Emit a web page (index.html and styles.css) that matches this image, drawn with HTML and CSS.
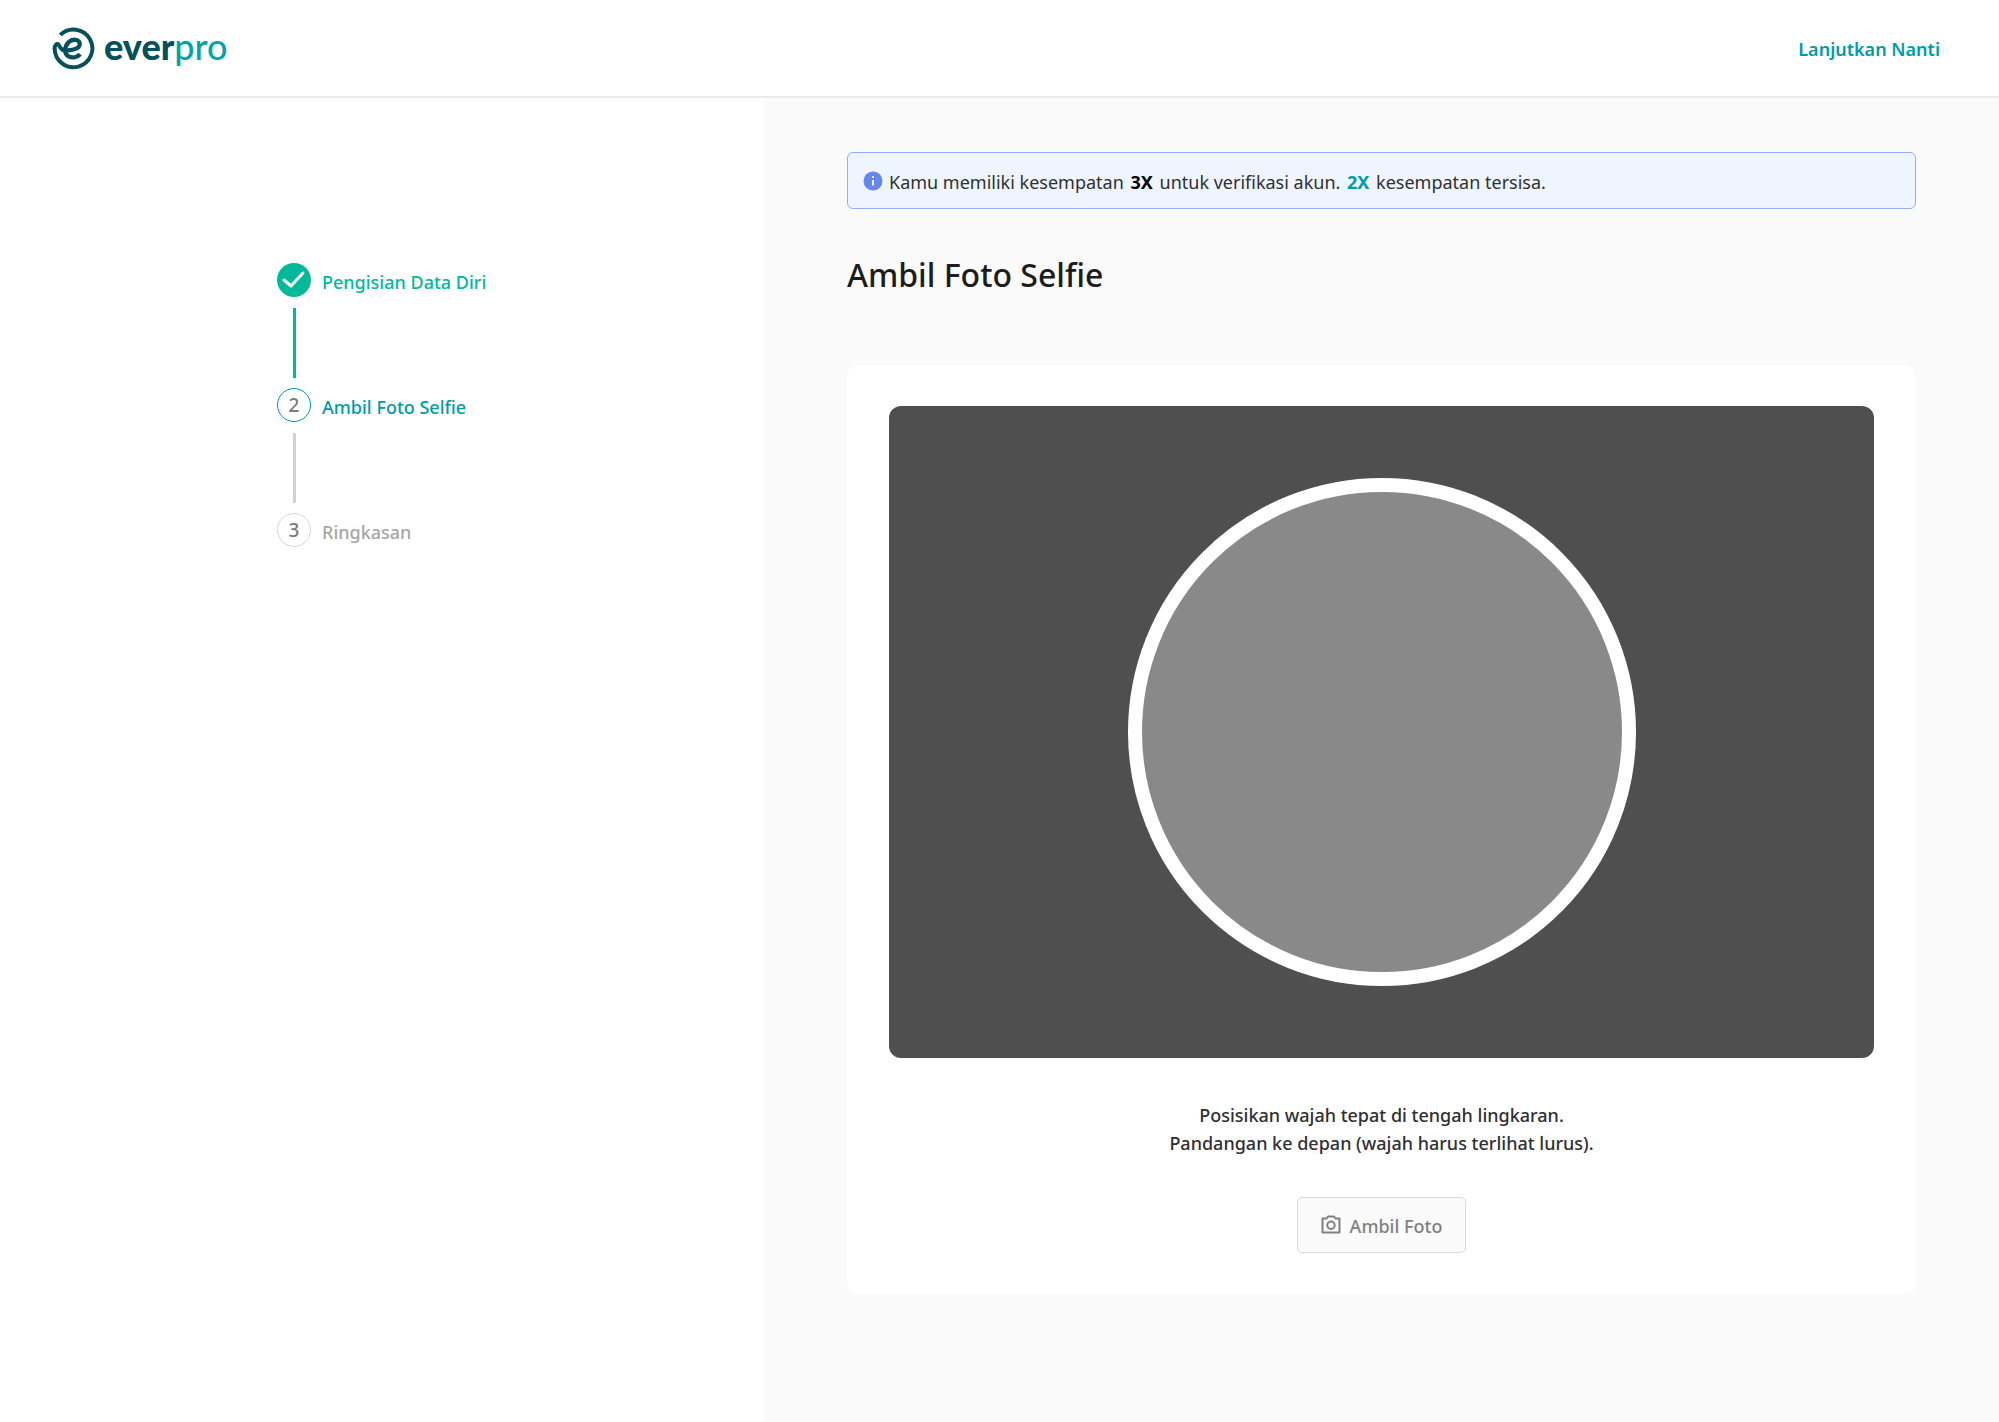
FILE: index.html
```html
<!DOCTYPE html>
<html lang="id">
<head>
    <meta charset="UTF-8">
    <meta name="viewport" content="width=device-width, initial-scale=1.0">
    <title>Everpro - Ambil Foto Selfie</title>
    <link rel="stylesheet" href="styles.css">
</head>
<body>
    <header class="header">
        <a href="#" class="logo" aria-label="everpro">
            <svg class="logo-mark" viewBox="0 0 130 130" fill="none" stroke="#05505a" stroke-linejoin="round">
                <path stroke-width="12" d="M25 24 A57 57 0 1 1 8 65"/>
                <path stroke-width="12" d="M8 67 C7 54 16 46 21 55 C25 64 32 71 42 71"/>
                <path stroke-width="13" d="M30 68 C50 74 85 68 84 50 C82 36 61 35 50 46 C37 60 36 80 50 89 C62 95 77 92 85 82"/>
            </svg>
            <span class="logo-text">ever<span class="logo-pro">pro</span></span>
        </a>
        <a href="#" class="later label">Lanjutkan Nanti</a>
    </header>

    <div class="layout">
        <!-- Langkah verifikasi -->
        <aside class="sidebar">
            <ol class="steps">
                <li class="step done">
                    <span class="step-icon">
                        <svg width="34" height="34" viewBox="0 0 34 34" fill="none" stroke="#fff" stroke-width="3" stroke-linecap="round" stroke-linejoin="round"><path d="M7 17 L14 23 L26 10"/></svg>
                    </span>
                    <span class="label">Pengisian Data Diri</span>
                </li>
                <li class="step active">
                    <span class="step-icon">2</span>
                    <span class="label">Ambil Foto Selfie</span>
                </li>
                <li class="step">
                    <span class="step-icon">3</span>
                    <span class="label">Ringkasan</span>
                </li>
            </ol>
        </aside>

        <main class="content">
            <div class="info">
                <svg class="info-icon" viewBox="0 0 20 20"><circle cx="10" cy="10" r="9.5" fill="#6687ea"/><path d="M10 9v5.500M10 5.200v1.900" stroke="#eff5ff" stroke-width="2"/></svg>
                <p class="label">Kamu memiliki kesempatan <strong>3X</strong> untuk verifikasi akun. <strong class="left">2X</strong> kesempatan tersisa.</p>
            </div>

            <h1>Ambil Foto Selfie</h1>

            <!-- Kamera -->
            <section class="card">
                <div class="camera">
                    <div class="face"></div>
                </div>
                <p class="hint">Posisikan wajah tepat di tengah lingkaran.<br>Pandangan ke depan (wajah harus terlihat lurus).</p>
                <button type="button" class="capture">
                    <svg width="20" height="20" viewBox="0 0 20 20" fill="none" stroke="#808080" stroke-width="2" stroke-linejoin="round"><path d="M1.500 3.500H5.500L7 1.500H13L14.500 3.500H18.500V17.500H1.500Z"/><circle cx="10" cy="10.300" r="3.700"/></svg>
                    <span class="label">Ambil Foto</span>
                </button>
            </section>
        </main>
    </div>
</body>
</html>
```
FILE: styles.css
```css
* {
    box-sizing: border-box;
}
body {
    margin: 0;
    background-color: #fff;
    color: #303030;
    font-family: 'Noto Sans', 'Open Sans', sans-serif;
    font-size: 18px;
    line-height: 28px;
}
p, h1, ol {
    margin: 0;
    padding: 0;
}
.label {
    padding-top: 2px;
}
.header {
    display: flex;
    justify-content: space-between;
    align-items: center;
    height: 98px;
    padding: 0 59px 0 52px;
    border-bottom: 2px solid #ebebeb;
}
.logo {
    display: flex;
    align-items: center;
    gap: 9px;
    text-decoration: none;
}
.logo-mark {
    width: 43px;
    height: 43px;
}
.logo-text {
    padding-bottom: 4px;
    font-family: Lato, sans-serif;
    font-size: 36px;
    font-weight: 900;
    line-height: 40px;
    color: #05505a;
}
.logo-pro {
    font-weight: 500;
    color: #00a5aa;
}
.later {
    color: #009ba8;
    font-weight: 600;
    text-decoration: none;
}
.layout {
    display: flex;
    min-height: 1323px;
}
.sidebar {
    width: 764px;
    flex-shrink: 0;
    padding: 165px 0 0 277px;
}
.steps {
    list-style: none;
}
.step {
    position: relative;
    display: flex;
    gap: 11px;
    height: 125px;
    line-height: 34px;
    font-weight: 500;
    color: #a6a6a6;
}
.step-icon {
    display: flex;
    justify-content: center;
    align-items: center;
    width: 34px;
    height: 34px;
    border: 1px solid #d6d6d6;
    border-radius: 50%;
    color: #7a7a7a;
    font-size: 19px;
}
/* garis penghubung antar langkah */
.step:not(:last-child)::after {
    content: '';
    position: absolute;
    left: 16px;
    top: 45px;
    width: 3px;
    height: 70px;
    background-color: #d2d2d2;
}
.done {
    color: #00b99b;
}
.done .step-icon {
    border: none;
    background-color: #00b99b;
}
.step.done::after {
    background-color: #00b99b;
}
.active {
    color: #009ba8;
}
.active .step-icon {
    border-color: #009ba8;
}
.content {
    flex: 1;
    padding: 54px 83px 127px;
    background-color: #fafafa;
}
.info {
    display: flex;
    align-items: center;
    gap: 6px;
    height: 57px;
    padding: 0 15px;
    border: 1px solid #93aef5;
    border-radius: 6px;
    background-color: #eff5ff;
}
.info-icon {
    width: 20px;
    height: 20px;
}
.info strong {
    margin: 0 2px;
    color: #000;
}
.info .left {
    color: #009ba8;
}
h1 {
    margin: 44px 0 68px;
    font-size: 32px;
    font-weight: 500;
    line-height: 44px;
    color: #1c1c1c;
}
.card {
    display: flex;
    flex-direction: column;
    align-items: center;
    padding: 41px 42px;
    border-radius: 12px;
    background-color: #fff;
}
.camera {
    display: flex;
    justify-content: center;
    align-items: center;
    width: 100%;
    height: 652px;
    border-radius: 12px;
    background-color: #4f4f4f;
}
.face {
    width: 508px;
    height: 508px;
    border: 14px solid #fff;
    border-radius: 50%;
    background-color: #898989;
}
.hint {
    margin: 43px 0 40px;
    text-align: center;
    font-weight: 500;
}
.capture {
    display: flex;
    align-items: center;
    gap: 9px;
    height: 56px;
    padding: 0 23px;
    border: 1px solid #d9d9d9;
    border-radius: 5px;
    background-color: #fafafa;
    color: #808080;
    font: inherit;
    font-weight: 500;
}
```
